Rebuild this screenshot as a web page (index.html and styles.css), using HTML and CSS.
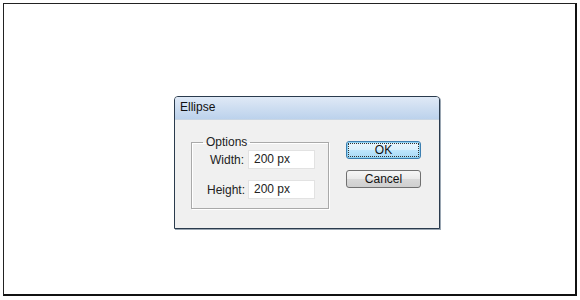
FILE: index.html
```html
<!DOCTYPE html>
<html>
<head>
<meta charset="utf-8">
<link rel="stylesheet" href="styles.css">
</head>
<body>
<div class="frame">
  <div class="dialog">
    <div class="titlebar">Ellipse</div>
    <div class="dbody">
      <fieldset class="group">
        <legend class="legend">Options</legend>
        <div class="rows">
          <label class="lbl">Width:</label>
          <div class="field">200 px</div>
          <label class="lbl">Height:</label>
          <div class="field">200 px</div>
        </div>
      </fieldset>
      <div class="buttons">
        <div class="btn btn-default"><span class="focus">OK</span></div>
        <div class="btn">Cancel</div>
      </div>
    </div>
  </div>
</div>
</body>
</html>
```
FILE: styles.css
```css
html, body {
  margin: 0;
  padding: 0;
  background: #ffffff;
}
body {
  width: 580px;
  height: 300px;
  overflow: hidden;
  font-family: "Liberation Sans", Arial, sans-serif;
  font-size: 12px;
  color: #1a1a1a;
}
.frame {
  box-sizing: border-box;
  margin: 3px 0 0 3px;
  width: 574px;
  height: 293px;
  border-top: 1px solid #222;
  border-left: 1px solid #222;
  border-right: 2px solid #111;
  border-bottom: 2px solid #111;
  padding: 92px 0 0 170px;
}
.dialog {
  box-sizing: border-box;
  width: 266px;
  height: 133px;
  border: 1px solid #2a3b4d;
  border-radius: 4px 4px 0 0;
  background: #f0f0f0;
  box-shadow: 1px 1px 0 #9aa6b2;
  display: flex;
  flex-direction: column;
}
.titlebar {
  height: 22px;
  line-height: 21px;
  padding-left: 5px;
  border-radius: 3px 3px 0 0;
  background: linear-gradient(#dfe9f6, #bcd2ec);
  border-bottom: 1px solid #c9d6e4;
  color: #111;
  font-size: 12px;
}
.dbody {
  display: flex;
  align-items: flex-start;
  padding: 15px 0 0 16px;
  gap: 17px;
}
.group {
  margin: 0;
  width: 138px;
  box-sizing: border-box;
  border: 1px solid #a9a9a9;
  box-shadow: 1px 1px 0 #fff, inset 1px 1px 0 #fff;
  padding: 1px 13px 9px 15px;
}
.legend {
  margin-left: -4px;
  padding: 0 3px;
  font-size: 12px;
  color: #222;
  line-height: 14px;
}
.rows {
  display: grid;
  grid-template-columns: 37px 67px;
  column-gap: 4px;
  row-gap: 11px;
  align-items: center;
}
.lbl {
  text-align: right;
  white-space: nowrap;
  color: #222;
}
.field {
  box-sizing: border-box;
  height: 19px;
  line-height: 17px;
  padding-left: 5px;
  background: #fff;
  border: 1px solid #e2e2e2;
  color: #222;
}
.buttons {
  display: flex;
  flex-direction: column;
  gap: 11px;
  padding-top: 6px;
}
.btn {
  box-sizing: border-box;
  width: 75px;
  height: 18px;
  border: 1px solid #707070;
  border-radius: 3px;
  background: linear-gradient(#f6f6f6 0%, #e9e9e9 50%, #d9d9d9 51%, #cfcfcf 100%);
  text-align: center;
  line-height: 16px;
  color: #111;
  font-size: 12px;
}
.btn-default {
  border-color: #3c7fb1;
  padding: 1px;
  box-shadow: inset 0 0 0 1px #8fd3f3;
  background: linear-gradient(#eaf6fd 0%, #d9f0fc 50%, #bee6fd 51%, #a7d9f5 100%);
}
.focus {
  display: block;
  height: 100%;
  box-sizing: border-box;
  outline: 1px dotted #333;
  outline-offset: -1px;
  line-height: 14px;
}
```
